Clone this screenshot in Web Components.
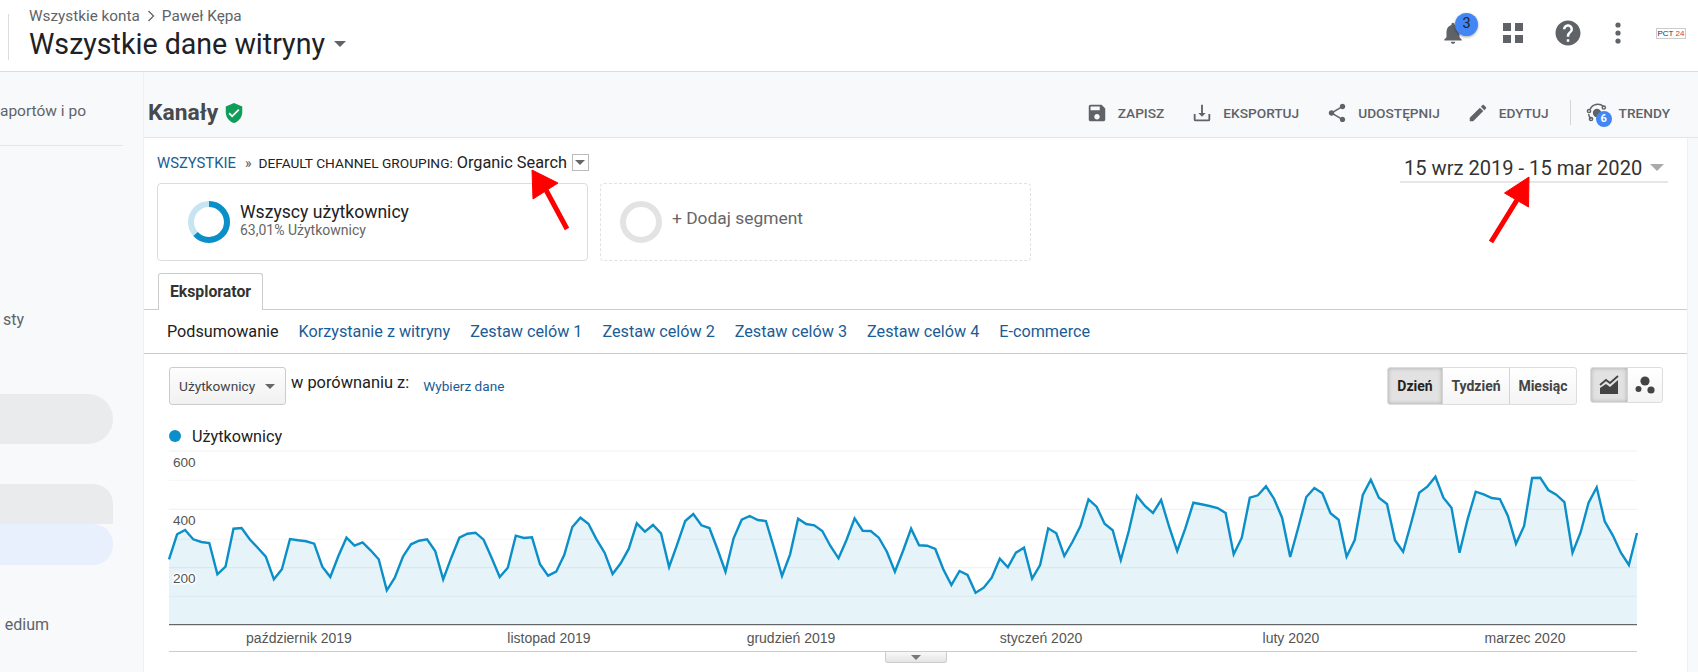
<!DOCTYPE html>
<html lang="pl">
<head>
<meta charset="utf-8">
<title>Kanały</title>
<style>
  html, body { margin: 0; width: 1698px; height: 672px; overflow: hidden; background: #fff; font-family: Roboto, "Liberation Sans", sans-serif; }
  #page { position: relative; width: 1698px; height: 672px; overflow: hidden; display: flex; flex-direction: column; }
  #body { display: flex; flex: 1; min-height: 0; }
</style>
</head>
<body>
<div id="page">
  <ga-header></ga-header>
  <div id="body">
    <ga-sidebar></ga-sidebar>
    <ga-main></ga-main>
  </div>
  <ga-arrows></ga-arrows>
</div>

<script>
// ── header ────────────────────────────────────────────────
class GaHeader extends HTMLElement {
  constructor() {
    super();
    this.attachShadow({ mode: 'open' });
    this.shadowRoot.innerHTML = `
      <style>
        :host { display: flex; flex: none; height: 72px; box-sizing: border-box; border-bottom: 1px solid #dadce0; background: #fff; align-items: flex-start; padding-left: 8px; }
        .divider { width: 1px; height: 46px; background: #dadce0; margin-top: 14px; }
        .titles { margin-left: 20px; padding-top: 6px; }
        .crumb { font-size: 15.3px; line-height: 20px; color: #5f6368; display: flex; align-items: center; gap: 7px; }
        .view { font-size: 28.6px; line-height: 34px; color: #202124; display: flex; align-items: center; margin-top: 1px; }
        .caret { width: 0; height: 0; border: 6px solid transparent; border-top-color: #5f6368; border-bottom: 0; margin-left: 9px; }
        .icons { margin-left: auto; display: flex; align-items: center; height: 66px; padding-right: 12px; }
        .bell { position: relative; width: 26px; height: 26px; margin-right: 36px; }
        .bell svg, .icons > svg { display: block; fill: #5f6368; }
        .badge { position: absolute; left: 15px; top: -7px; width: 23px; height: 23px; border-radius: 50%; background: #4285f4; color: #202124; font-size: 14.5px; line-height: 22px; text-align: center; box-shadow: 0 1px 3px rgba(0,0,0,.35); }
        .logo { width: 30px; height: 11px; margin-left: 35px; border: 1px solid #ccc; box-sizing: border-box; font: 8px/9px "Liberation Sans", sans-serif; color: #333; white-space: nowrap; overflow: hidden; text-align: center; }
        .logo b { color: #d33; font-weight: 400; }
      </style>
      <div class="divider"></div>
      <div class="titles">
        <div class="crumb"><span>Wszystkie konta</span>
          <svg width="8" height="12" viewBox="0 0 8 12"><path d="M1.5 1l5 5-5 5" fill="none" stroke="#5f6368" stroke-width="1.3"/></svg>
          <span>Paweł Kępa</span></div>
        <div class="view">Wszystkie dane witryny<span class="caret"></span></div>
      </div>
      <div class="icons">
        <div class="bell">
          <svg width="26" height="26" viewBox="0 0 24 24"><path d="M12 22c1.1 0 2-.9 2-2h-4c0 1.1.89 2 2 2zm6-6v-5c0-3.07-1.64-5.64-4.5-6.32V4c0-.83-.67-1.5-1.5-1.5s-1.5.67-1.5 1.5v.68C7.63 5.36 6 7.92 6 11v5l-2 2v1h16v-1l-2-2z"/></svg>
          <span class="badge">3</span>
        </div>
        <svg width="22" height="22" viewBox="0 0 22 22"><path d="M1 1h8v8H1zM13 1h8v8h-8zM1 13h8v8H1zM13 13h8v8h-8z"/></svg>
        <svg width="30" height="30" viewBox="0 0 24 24" style="margin-left:29px"><path d="M12 2C6.48 2 2 6.48 2 12s4.48 10 10 10 10-4.48 10-10S17.52 2 12 2zm1 17h-2v-2h2v2zm2.07-7.75l-.9.92C13.45 12.9 13 13.5 13 15h-2v-.5c0-1.1.45-2.1 1.17-2.83l1.24-1.26c.37-.36.59-.86.59-1.41 0-1.1-.9-2-2-2s-2 .9-2 2H8c0-2.21 1.79-4 4-4s4 1.79 4 4c0 .88-.36 1.68-.93 2.25z"/></svg>
        <svg width="6" height="22" viewBox="0 0 6 22" style="margin-left:32px"><circle cx="3" cy="3" r="2.6"/><circle cx="3" cy="11" r="2.6"/><circle cx="3" cy="19" r="2.6"/></svg>
        <div class="logo">PCT <b>24</b></div>
      </div>
    `;
  }
}
customElements.define('ga-header', GaHeader);

// ── left navigation (mostly covered, only the ends of rows are visible) ──
class GaSidebar extends HTMLElement {
  constructor() {
    super();
    this.attachShadow({ mode: 'open' });
    this.shadowRoot.innerHTML = `
      <style>
        :host { display: block; flex: none; width: 144px; box-sizing: border-box; background: #f8f9fb; border-right: 1px solid #eef0f2; overflow: hidden; color: #5f6368; }
        .row { display: flex; justify-content: flex-end; white-space: nowrap; }
        .search { font-size: 15.5px; line-height: 20px; padding: 29px 57px 0 0; }
        .sep { height: 1px; background: #e3e5e8; margin: 24px 20px 0 0; }
        .lists { font-size: 16px; line-height: 22px; padding: 163px 119px 0 0; }
        .pill { height: 50px; width: 113px; margin-top: 63px; background: #e9ebec; border-radius: 0 25px 25px 0; }
        .pill.grey { height: 40px; margin-top: 40px; border-radius: 0 20px 0 0; }
        .pill.blue { height: 41px; margin-top: 0; background: #e8f0fe; border-radius: 0 20px 20px 0; }
        .medium { font-size: 16px; line-height: 22px; padding: 49px 94px 0 0; }
      </style>
      <div class="row search">aportów i po</div>
      <div class="sep"></div>
      <div class="row lists">sty</div>
      <div class="pill"></div>
      <div class="pill grey"></div>
      <div class="pill blue"></div>
      <div class="row medium">edium</div>
    `;
  }
}
customElements.define('ga-sidebar', GaSidebar);

// ── report title + actions ───────────────────────────────
class GaToolbar extends HTMLElement {
  constructor() {
    super();
    this.attachShadow({ mode: 'open' });
    const actions = [
      ['ZAPISZ', 'M17 3H5c-1.11 0-2 .9-2 2v14c0 1.1.89 2 2 2h14c1.1 0 2-.9 2-2V7l-4-4zm-5 16c-1.66 0-3-1.34-3-3s1.34-3 3-3 3 1.34 3 3-1.34 3-3 3zm3-10H5V5h10v4z'],
      ['EKSPORTUJ', 'M19 13v6H5v-6H3v6a2 2 0 0 0 2 2h14a2 2 0 0 0 2-2v-6zM12 16l4-4h-3V3h-2v9H8z'],
      ['UDOSTĘPNIJ', 'M18 16.08c-.76 0-1.44.3-1.96.77L8.91 12.7c.05-.23.09-.46.09-.7s-.04-.47-.09-.7l7.05-4.11c.54.5 1.25.81 2.04.81 1.66 0 3-1.34 3-3s-1.34-3-3-3-3 1.34-3 3c0 .24.04.47.09.7L8.04 9.81C7.5 9.31 6.79 9 6 9c-1.66 0-3 1.34-3 3s1.34 3 3 3c.79 0 1.5-.31 2.04-.81l7.12 4.16c-.05.21-.08.43-.08.65 0 1.61 1.31 2.92 2.92 2.92 1.61 0 2.92-1.31 2.92-2.92s-1.31-2.92-2.92-2.92z'],
      ['EDYTUJ', 'M3 17.25V21h3.75L17.81 9.94l-3.75-3.75L3 17.25zM20.71 7.04c.39-.39.39-1.02 0-1.41l-2.34-2.34c-.39-.39-1.02-.39-1.41 0l-1.83 1.83 3.75 3.75 1.83-1.83z']
    ];
    this.shadowRoot.innerHTML = `
      <style>
        :host { display: flex; align-items: center; height: 66px; box-sizing: border-box; padding: 16px 28px 0 4px; background: #f8f9fb; border-bottom: 1px solid #e3e5e8; font-size: 13.7px; font-weight: 500; color: #5f6368; }
        h1 { margin: 0; font-size: 22.8px; line-height: 26px; font-weight: 700; color: #46494d; }
        .shield { margin-left: 5px; fill: #0f9d58; display: block; }
        .spacer { flex: 1; }
        .action { display: flex; align-items: center; margin-left: 27px; }
        .action svg { fill: #5f6368; margin-right: 10px; display: block; }
        .sep { width: 1px; height: 25px; background: #d3d6d9; margin: 0 15px 0 21px; }
        .trends { position: relative; display: flex; align-items: center; }
        .trends svg { margin-right: 11px; display: block; }
        .badge { position: absolute; left: 10px; top: 9px; width: 16px; height: 16px; border-radius: 50%; background: #4285f4; color: #fff; font-size: 11px; font-weight: 700; line-height: 16px; text-align: center; }
      </style>
      <h1>Kanały</h1>
      <svg class="shield" width="22" height="22" viewBox="0 0 24 24"><path d="M12 1L3 5v6c0 5.55 3.84 10.74 9 12 5.16-1.26 9-6.45 9-12V5l-9-4zm-2 16l-4-4 1.41-1.41L10 14.17l6.59-6.59L18 9l-8 8z"/></svg>
      <div class="spacer"></div>
      ${actions.map(([label, d]) => `<div class="action"><svg width="22" height="22" viewBox="0 0 24 24"><path d="${d}"/></svg>${label}</div>`).join('')}
      <div class="sep"></div>
      <div class="trends">
        <svg width="22" height="22" viewBox="0 0 22 22" fill="none" stroke="#5f6368" stroke-width="1.5">
          <path d="M4 7.5A8.5 8.5 0 0 1 17.5 4.5"/><path d="M2.6 12A8.5 8.5 0 0 0 5 17"/>
          <circle cx="11" cy="11" r="3.4" fill="#5f6368"/><circle cx="17.8" cy="5.5" r="1.6"/><circle cx="3" cy="9" r="1.6"/><circle cx="5" cy="17" r="1.6"/>
        </svg>
        <span class="badge">6</span>
        TRENDY
      </div>
    `;
  }
}
customElements.define('ga-toolbar', GaToolbar);

// ── segment card, filled or empty (dashed) ───────────────
class GaSegment extends HTMLElement {
  constructor() {
    super();
    this.attachShadow({ mode: 'open' });
  }
  connectedCallback() {
    const empty = this.hasAttribute('empty');
    const r = 18, len = 2 * Math.PI * r, share = parseFloat(this.getAttribute('share') || '0');
    this.shadowRoot.innerHTML = `
      <style>
        :host { display: flex; align-items: center; box-sizing: border-box; width: 431px; height: 78px; border: 1px ${empty ? 'dashed #dfe1e3' : 'solid #dadce0'}; border-radius: 4px; padding-left: ${empty ? '18' : '29'}px; }
        svg { display: block; flex: none; margin-right: 9px; }
        .body { margin-top: ${empty ? '-9' : '-3'}px; }
        .name { font-size: ${empty ? '17.4' : '17.6'}px; line-height: 20px; color: ${empty ? '#666' : '#212121'}; }
        .sub { font-size: 14px; line-height: 17px; color: #666; }
      </style>
      <svg width="44" height="44" viewBox="0 0 44 44" fill="none" stroke-width="6">
        ${empty
          ? `<circle cx="22" cy="22" r="${r}" stroke="#e3e3e3"/>`
          : `<circle cx="22" cy="22" r="${r}" stroke="#c6e4f1"/>
             <circle cx="22" cy="22" r="${r}" stroke="#0b8fc8" transform="rotate(-90 22 22)" stroke-dasharray="${len * share} ${len}"/>`}
      </svg>
      <div class="body"><div class="name"><slot></slot></div>${empty ? '' : `<div class="sub">${this.getAttribute('sub') || ''}</div>`}</div>
    `;
  }
}
customElements.define('ga-segment', GaSegment);

// ── users over time ──────────────────────────────────────
// y values read off the reference, one per day, 15 Sep - 15 Mar (three times the pixel offset)
const USERS = [355,280,267,295,303,306,400,377,263,261,295,320,347,415,385,294,298,301,308,377,408,345,290,314,304,328,355,448,410,347,310,299,295,330,415,350,290,278,275,296,350,408,380,284,291,289,370,404,392,342,258,230,248,295,335,399,367,323,247,272,252,277,378,310,240,219,253,261,325,392,292,236,225,237,240,320,405,340,233,249,253,270,315,352,297,232,269,270,290,332,392,330,263,313,314,324,385,432,390,402,455,440,410,353,379,335,320,413,372,262,277,345,303,255,175,197,248,268,357,270,165,195,216,177,258,330,262,185,190,195,201,216,340,290,170,163,136,173,230,348,260,168,141,157,217,236,347,297,162,116,170,189,298,332,245,155,137,107,170,200,335,235,152,160,171,174,225,308,255,111,110,147,161,183,335,275,185,139,241,283,335,372,276];

class GaChart extends HTMLElement {
  constructor() {
    super();
    this.attachShadow({ mode: 'open' });
    const w = 1468, step = w / (USERS.length - 1), top = 5;
    const yOf = v => +(v / 3 - top).toFixed(1);
    const pts = USERS.map((v, i) => `${(step * i).toFixed(1)},${yOf(v)}`).join(' ');
    const base = yOf(551);
    const grid = [30, 118, 205, 295, 380, 466].map((v, i) =>
      `<line x1="0" x2="${w}" y1="${yOf(v)}" y2="${yOf(v)}" stroke="${i % 2 ? '#f6f6f6' : '#efefef'}"/>`).join('');
    const months = [['październik 2019', 130], ['listopad 2019', 380], ['grudzień 2019', 622], ['styczeń 2020', 872], ['luty 2020', 1122], ['marzec 2020', 1356]];
    const ticks = [['600', 21], ['400', 79], ['200', 137]];
    this.shadowRoot.innerHTML = `
      <style>
        :host { display: block; margin-left: 25px; width: 1468px; position: relative; }
        svg { display: block; overflow: visible; }
        text { font: 14px "Liberation Sans", Arial, sans-serif; fill: #555; }
        .tick { font-size: 13.6px; paint-order: stroke; stroke: #fff; stroke-width: 3px; }
        .handle { width: 60px; height: 7px; margin-left: 716px; border: 1px solid #ccc; border-top: 0; border-radius: 0 0 3px 3px; background: linear-gradient(#f8f8f8, #e4e4e4); display: flex; justify-content: center; padding-top: 3px; }
        .handle i { width: 0; height: 0; border: 5px solid transparent; border-top-color: #777; border-bottom: 0; }
      </style>
      <svg width="${w}" height="206" viewBox="0 0 ${w} 206">
        ${grid}
        <polygon points="0,${base} ${pts} ${w},${base}" fill="#058dc7" fill-opacity=".1"/>
        <polyline points="${pts}" fill="none" stroke="#0b8fc8" stroke-width="2.4" stroke-linejoin="miter"/>
        <line x1="0" x2="${w}" y1="${base}" y2="${base}" stroke="#444" stroke-width="1"/>
        <line x1="0" x2="${w}" y1="205.5" y2="205.5" stroke="#ccc"/>
        ${ticks.map(([t, y]) => `<text class="tick" x="4" y="${y}">${t}</text>`).join('')}
        ${months.map(([t, x]) => `<text x="${x}" y="196.5" text-anchor="middle">${t}</text>`).join('')}
      </svg>
      <div class="handle"><i></i></div>
    `;
  }
}
customElements.define('ga-chart', GaChart);

// ── explorer tab, sub tabs and chart controls ────────────
class GaExplorer extends HTMLElement {
  constructor() {
    super();
    this.attachShadow({ mode: 'open' });
    const links = ['Korzystanie z witryny', 'Zestaw celów 1', 'Zestaw celów 2', 'Zestaw celów 3', 'Zestaw celów 4', 'E-commerce'];
    this.shadowRoot.innerHTML = `
      <style>
        :host { display: block; margin-top: 12px; color: #212121; }
        .tabs { height: 36px; border-bottom: 1px solid #ccc; padding-left: 14px; display: flex; }
        .tab { height: 37px; box-sizing: border-box; width: 105px; border: 1px solid #ccc; border-bottom: 0; border-radius: 3px 3px 0 0; background: #fff; font-size: 15.8px; font-weight: 700; line-height: 36px; text-align: center; color: #333; }
        .sub { height: 43px; border-bottom: 1px solid #ccc; display: flex; align-items: center; padding-left: 23px; gap: 20px; font-size: 16.2px; }
        .sub a { color: #1a5c96; text-decoration: none; }
        .controls { display: flex; align-items: flex-start; padding: 13px 0 0 25px; }
        .select { width: 117px; height: 38px; box-sizing: border-box; border: 1px solid #ccc; border-radius: 3px; background: linear-gradient(#fdfdfd, #f1f1f1); font-size: 13.7px; line-height: 36px; padding-left: 9px; color: #444; display: flex; align-items: center; }
        .select i { width: 0; height: 0; border: 5px solid transparent; border-top-color: #666; border-bottom: 0; margin-left: 10px; }
        .vs { font-size: 16.4px; line-height: 20px; margin: 6px 0 0 5px; }
        .pick { font-size: 13.6px; line-height: 20px; margin: 9px 0 0 14px; color: #1a5c96; }
        .group { display: flex; height: 38px; box-sizing: border-box; border: 1px solid #ddd; border-radius: 3px; font-size: 14px; font-weight: 700; color: #444; background: linear-gradient(#fff, #f4f4f4); }
        .group span { display: flex; align-items: center; justify-content: center; width: 66px; border-left: 1px solid #d4d4d4; }
        .group span:first-child { border-left: 0; width: 54px; background: #e2e2e2; box-shadow: inset 0 0 4px rgba(0,0,0,.25); color: #222; border-radius: 2px 0 0 2px; }
        .group.right { margin-left: auto; }
        .icons { margin: 0 24px 0 13px; height: 36px; }
        .icons span { width: 34px; }
        .icons span:first-child { width: 36px; }
        .legend { display: flex; align-items: center; height: 20px; margin: 21px 0 0 25px; font-size: 16.2px; }
        .legend i { width: 12px; height: 12px; border-radius: 50%; background: #0b8fc8; margin-right: 11px; }
      </style>
      <div class="tabs"><div class="tab">Eksplorator</div></div>
      <div class="sub"><span>Podsumowanie</span>${links.map(l => `<a href="#">${l}</a>`).join('')}</div>
      <div class="controls">
        <div class="select">Użytkownicy<i></i></div>
        <div class="vs">w porównaniu z:</div>
        <div class="pick">Wybierz dane</div>
        <div class="group right"><span>Dzień</span><span>Tydzień</span><span>Miesiąc</span></div>
        <div class="group icons">
          <span><svg width="22" height="20" viewBox="0 0 22 20"><path d="M2 19v-6l6-4 4 3 8-7v14z" fill="#444"/><path d="M2 10l6-5 4 3 8-7" fill="none" stroke="#444" stroke-width="1.8"/></svg></span>
          <span><svg width="22" height="20" viewBox="0 0 22 20" fill="#444"><circle cx="11" cy="6" r="4.6"/><circle cx="4.500" cy="14" r="3"/><circle cx="17" cy="15" r="3.6"/></svg></span>
        </div>
      </div>
      <div class="legend"><i></i>Użytkownicy</div>
      <ga-chart></ga-chart>
    `;
  }
}
customElements.define('ga-explorer', GaExplorer);

// ── the report panel ─────────────────────────────────────
class GaMain extends HTMLElement {
  constructor() {
    super();
    this.attachShadow({ mode: 'open' });
    this.shadowRoot.innerHTML = `
      <style>
        :host { display: flex; flex-direction: column; flex: 1; min-width: 0; background: #f8f9fb; }
        .panel { flex: 1; background: #fff; margin-right: 10px; border-right: 1px solid #eef0f2; }
        .top { display: flex; justify-content: space-between; padding-left: 13px; }
        .crumbs { display: flex; align-items: center; height: 19px; margin-top: 15px; margin-bottom: 11px; font-size: 13.7px; color: #222; white-space: nowrap; }
        .crumbs a { font-size: 14.8px; color: #1a5c96; text-decoration: none; }
        .crumbs .sep { margin: 0 7px 0 9px; color: #555; font-size: 14px; }
        .crumbs .value { font-size: 16.3px; margin-left: 4px; }
        .crumbs .drop { width: 17px; height: 17px; box-sizing: border-box; border: 1px solid #bbb; margin-left: 5px; display: flex; align-items: center; justify-content: center; }
        .drop i { width: 0; height: 0; border: 5px solid transparent; border-top-color: #666; border-bottom: 0; }
        .segments { display: flex; gap: 12px; }
        .date { display: flex; align-items: center; align-self: flex-start; box-sizing: border-box; height: 29px; width: 268px; margin: 16px 19px 0 0; padding-left: 4px; border-bottom: 2px solid #e6e6e6; font-size: 20.1px; color: #333; white-space: nowrap; }
        .date i { width: 0; height: 0; border: 7.5px solid transparent; border-top-color: #aaa; border-bottom: 0; margin-left: 8px; }
      </style>
      <ga-toolbar></ga-toolbar>
      <div class="panel">
        <div class="top">
          <div>
            <div class="crumbs"><a href="#">WSZYSTKIE</a><span class="sep">»</span>DEFAULT CHANNEL GROUPING:<span class="value">Organic Search</span><span class="drop"><i></i></span></div>
            <div class="segments">
              <ga-segment share="0.6301" sub="63,01% Użytkownicy">Wszyscy użytkownicy</ga-segment>
              <ga-segment empty>+ Dodaj segment</ga-segment>
            </div>
          </div>
          <div class="date">15 wrz 2019 - 15 mar 2020<i></i></div>
        </div>
        <ga-explorer></ga-explorer>
      </div>
    `;
  }
}
customElements.define('ga-main', GaMain);

// ── annotation arrows drawn over the screenshot ──────────
class GaArrows extends HTMLElement {
  constructor() {
    super();
    this.attachShadow({ mode: 'open' });
    this.shadowRoot.innerHTML = `
      <style>:host { position: absolute; left: 0; top: 0; width: 1698px; height: 672px; pointer-events: none; } svg { display: block; }</style>
      <svg width="1698" height="672" fill="#f00" stroke="#f00">
        <path d="M532 170L533 199 558 183z"/><line x1="546" y1="190" x2="567" y2="229" stroke-width="5"/>
        <path d="M1529 177L1504.500 193 1528.500 207z"/><line x1="1517" y1="200" x2="1491" y2="242" stroke-width="5"/>
      </svg>
    `;
  }
}
customElements.define('ga-arrows', GaArrows);
</script>
</body>
</html>
